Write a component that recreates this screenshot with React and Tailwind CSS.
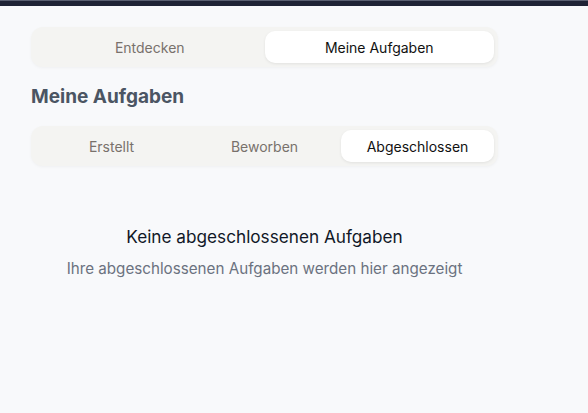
import React, { useState } from "react";

const font = { fontFamily: "Inter, 'Noto Sans', sans-serif" };

const Segmented = ({ items, active, onChange, cols }) => (
  <div
    className={`grid ${cols} w-[467px] h-10 p-1 rounded-xl bg-[#f4f4f2] shadow-[0_1px_3px_rgba(0,0,0,0.04)]`}
  >
    {items.map((item) => (
      <button
        key={item}
        onClick={() => onChange(item)}
        className={
          item === active
            ? "rounded-[10px] bg-white text-[14px] text-[#111111] shadow-[0_1px_3px_rgba(0,0,0,0.08)]"
            : "rounded-[10px] text-[14px] text-[#78716c]"
        }
      >
        {item}
      </button>
    ))}
  </div>
);

export default function App() {
  const [view, setView] = useState("Meine Aufgaben");
  const [tab, setTab] = useState("Abgeschlossen");

  return (
    <div className="min-h-screen w-full bg-[#f8f9fb]" style={font}>
      <div className="h-[6px] bg-[#1f2336] border-t border-[#5b6072]" />
      <div className="px-[31px] pt-[21px]">
        <Segmented
          items={["Entdecken", "Meine Aufgaben"]}
          active={view}
          onChange={setView}
          cols="grid-cols-2"
        />
        <h2 className="mt-[18px] text-[19px] font-bold leading-6 text-[#4b5563]">Meine Aufgaben</h2>
        <div className="mt-[17px]">
          <Segmented
            items={["Erstellt", "Beworben", "Abgeschlossen"]}
            active={tab}
            onChange={setTab}
            cols="grid-cols-3"
          />
        </div>
        <div className="w-[467px] pt-[59px] text-center">
          <p className="text-[17.2px] leading-6 text-[#111827]">Keine abgeschlossenen Aufgaben</p>
          <p className="mt-[8px] text-[15.2px] leading-6 text-[#6b7280]">
            Ihre abgeschlossenen Aufgaben werden hier angezeigt
          </p>
        </div>
      </div>
    </div>
  );
}
